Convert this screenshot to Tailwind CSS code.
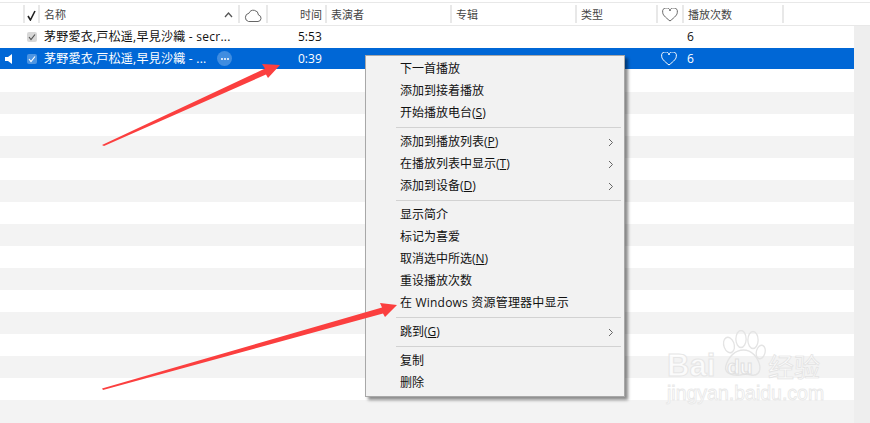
<!DOCTYPE html>
<html lang="zh-CN">
<head>
  <meta charset="UTF-8"/>
  <title>iTunes 播放列表</title>
  <script src="https://cdn.jsdelivr.net/npm/@tailwindcss/browser@4"></script>
</head>
<body class="relative w-[870px] h-[423px] overflow-hidden bg-white text-[12px] text-[#111] font-['Open_Sans','Noto_Sans_CJK_JP',sans-serif]">

  <!-- column header -->
  <div class="mt-[2px] h-[24px] border-y border-[#e8e8e8] flex items-center text-[11px] text-[#444]">
    <div class="w-[25px] h-[18px] border-r-2 border-[#e8e8e8]"></div>
    <div class="w-[15px] h-[18px] pt-[2px] border-r-2 border-[#e8e8e8] flex items-center justify-center">
      <svg width="9" height="11" viewBox="0 0 9 11" fill="none" stroke="#222" stroke-width="1.6"><path d="M1 6l2.4 4L8 1"/></svg>
    </div>
    <div class="w-[200px] h-[18px] pt-[2px] border-r-2 border-[#e8e8e8] flex items-center justify-between pl-[4px] pr-[5px]">
      <span>名称</span>
      <svg width="9" height="6" viewBox="0 0 9 6" fill="none" stroke="#555" stroke-width="1.3"><path d="M1 5l3.5-4L8 5"/></svg>
    </div>
    <div class="w-[28px] h-[18px] pt-[2px] border-r-2 border-[#e8e8e8] flex items-center justify-center">
      <svg width="18" height="13" viewBox="0 0 18 13" fill="none" stroke="#666"><path d="M4.5 12.5h9.5a3.3 3.3 0 0 0 .5-6.5 5 5 0 0 0-9.6-1.7A4.2 4.2 0 0 0 4.500 12.500z"/></svg>
    </div>
    <div class="w-[59px] h-[18px] pt-[2px] border-r-2 border-[#e8e8e8] flex items-center justify-end pr-[3px]">时间</div>
    <div class="w-[125px] h-[18px] pt-[2px] border-r-2 border-[#e8e8e8] flex items-center pl-[4px]">表演者</div>
    <div class="w-[125px] h-[18px] pt-[2px] border-r-2 border-[#e8e8e8] flex items-center pl-[4px]">专辑</div>
    <div class="w-[81px] h-[18px] pt-[2px] border-r-2 border-[#e8e8e8] flex items-center pl-[4px]">类型</div>
    <div class="w-[26px] h-[18px] pt-[2px] border-r-2 border-[#e8e8e8] flex items-center justify-center">
      <svg width="16" height="14" viewBox="0 0 16 14" fill="none" stroke="#666"><path d="M8 13C3 9 .7 6.800 .7 4.300A3.500 3.500 0 0 1 8 3a3.500 3.500 0 0 1 7.300 1.300C15.300 6.800 13 9 8 13z"/></svg>
    </div>
    <div class="w-[100px] h-[18px] pt-[2px] border-r-2 border-[#e8e8e8] flex items-center pl-[4px]">播放次数</div>
  </div>

  <!-- track rows -->
  <div class="flex">
    <div class="w-[854px]">
      <div class="h-[22px] flex items-center">
        <div class="w-[27px]"></div>
        <div class="w-[10px] h-[10px] rounded-[2px] bg-[#d8d8d8] flex items-center justify-center">
          <svg width="8" height="8" viewBox="0 0 8 8" fill="none" stroke="#555" stroke-width="1.200"><path d="M1 4l2 2.500L7 1.500"/></svg>
        </div>
        <div lang="ja" class="w-[193px] pl-[7px] whitespace-nowrap tracking-[0.25px]">茅野愛衣,戸松遥,早見沙織 - secr...</div>
        <div class="w-[68px]"></div>
        <div class="w-[363px]">5:53</div>
        <div class="w-[26px]"></div>
        <div>6</div>
      </div>
      <div class="h-[21px] mb-px flex items-center bg-[#0067d6] text-white">
        <div class="w-[27px] pl-[5px]">
          <svg width="8" height="10" viewBox="0 0 8 10" fill="#fff"><path d="M0 3h3l4-3v10L3 7H0z"/></svg>
        </div>
        <div class="w-[10px] h-[10px] rounded-[2px] bg-white/30 flex items-center justify-center">
          <svg width="8" height="8" viewBox="0 0 8 8" fill="none" stroke="#fff" stroke-width="1.200"><path d="M1 4l2 2.500L7 1.500"/></svg>
        </div>
        <div lang="ja" class="w-[180px] pl-[7px] whitespace-nowrap tracking-[0.25px]">茅野愛衣,戸松遥,早見沙織 - ...</div>
        <div class="w-[15px] h-[15px] rounded-full bg-white/25 flex items-center justify-center gap-px">
          <span class="w-[2px] h-[2px] rounded-full bg-white"></span>
          <span class="w-[2px] h-[2px] rounded-full bg-white"></span>
          <span class="w-[2px] h-[2px] rounded-full bg-white"></span>
        </div>
        <div class="w-[66px]"></div>
        <div class="w-[363px]">0:39</div>
        <div class="w-[26px]">
          <svg width="16" height="14" viewBox="0 0 16 14" fill="none" stroke="#fff"><path d="M8 13C3 9 .7 6.800 .7 4.300A3.500 3.500 0 0 1 8 3a3.500 3.500 0 0 1 7.300 1.300C15.300 6.800 13 9 8 13z"/></svg>
        </div>
        <div>6</div>
      </div>
      <div class="h-[22px]"></div>
      <div class="h-[22px] bg-[#f3f3f3]"></div>
      <div class="h-[22px]"></div>
      <div class="h-[22px] bg-[#f3f3f3]"></div>
      <div class="h-[22px]"></div>
      <div class="h-[22px] bg-[#f3f3f3]"></div>
      <div class="h-[22px]"></div>
      <div class="h-[22px] bg-[#f3f3f3]"></div>
      <div class="h-[22px]"></div>
      <div class="h-[22px] bg-[#f3f3f3]"></div>
      <div class="h-[22px]"></div>
      <div class="h-[22px] bg-[#f3f3f3]"></div>
      <div class="h-[22px]"></div>
      <div class="h-[22px] bg-[#f3f3f3]"></div>
      <div class="h-[22px]"></div>
      <div class="h-[23px] bg-[#f3f3f3]"></div>
    </div>
    <div class="w-[16px] bg-[#eeeeee]"></div>
  </div>

  <!-- watermark -->
  <div class="absolute left-[667px] top-[330px] w-[165px] h-[80px]">
    <svg class="absolute left-[50px] top-0" width="60" height="50" viewBox="0 0 70 50" preserveAspectRatio="none" fill="none" stroke="#e4e4e4" stroke-width="1.500">
      <ellipse cx="14" cy="15" rx="6" ry="8" transform="rotate(-25 14 15)"/>
      <ellipse cx="28" cy="9" rx="6" ry="8.500"/>
      <ellipse cx="42" cy="10" rx="6" ry="8.500"/>
      <ellipse cx="51" cy="22" rx="5" ry="7" transform="rotate(20 51 22)"/>
      <path d="M10 37c3-11 12-17 21-17s17 7 19 16c1 6-3 10-10 9-5-1-8-1-13 0-10 1-18-2-17-8z"/>
    </svg>
    <div class="absolute left-0 top-[17px] text-[31px] leading-[38px] font-bold text-white/70 [-webkit-text-stroke:1px_#e6e6e6] font-['Liberation_Sans',sans-serif]">Bai</div>
    <div class="absolute left-[60px] top-[25px] text-[21px] leading-[24px] font-bold text-white/70 [-webkit-text-stroke:1px_#e0e0e0] font-['Liberation_Sans',sans-serif]">du</div>
    <div class="absolute left-[101px] top-[21px] text-[26px] leading-[30px] text-white/70 [-webkit-text-stroke:0.7px_#e2e2e2] font-['Noto_Sans_CJK_SC',sans-serif]">经验</div>
    <div class="absolute left-0 top-[51px] text-[19.5px] leading-[24px] text-white/70 [-webkit-text-stroke:0.8px_#e8e8e8] font-['Liberation_Sans',sans-serif]">jingyan.baidu.com</div>
  </div>

  <!-- context menu -->
  <div class="absolute left-[365px] top-[55px] w-[260px] h-[342px] pt-[2px] bg-[#f2f2f2] border border-[#a8a8a8] shadow-[3px_3px_3px_rgba(0,0,0,0.45)] text-[#111] font-['Open_Sans','Noto_Sans_CJK_SC',sans-serif]">
    <div class="h-[22px] pl-[34px] flex items-center">下一首播放</div>
    <div class="h-[22px] pl-[34px] flex items-center">添加到接着播放</div>
    <div class="h-[22px] pl-[34px] flex items-center"><span>开始播放电台(<u>S</u>)</span></div>
    <div class="h-px ml-[30px] mr-[3px] mt-[3px] mb-[3px] bg-[#d2d2d2]"></div>
    <div class="h-[22px] pl-[34px] pr-[10px] flex items-center justify-between">
      <span>添加到播放列表(<u>P</u>)</span>
      <svg width="6" height="9" viewBox="0 0 6 9" fill="none" stroke="#666"><path d="M1 1l3.500 3.500L1 8"/></svg>
    </div>
    <div class="h-[22px] pl-[34px] pr-[10px] flex items-center justify-between">
      <span>在播放列表中显示(<u>T</u>)</span>
      <svg width="6" height="9" viewBox="0 0 6 9" fill="none" stroke="#666"><path d="M1 1l3.500 3.500L1 8"/></svg>
    </div>
    <div class="h-[22px] pl-[34px] pr-[10px] flex items-center justify-between">
      <span>添加到设备(<u>D</u>)</span>
      <svg width="6" height="9" viewBox="0 0 6 9" fill="none" stroke="#666"><path d="M1 1l3.500 3.500L1 8"/></svg>
    </div>
    <div class="h-px ml-[30px] mr-[3px] mt-[3px] mb-[3px] bg-[#d2d2d2]"></div>
    <div class="h-[22px] pl-[34px] flex items-center">显示简介</div>
    <div class="h-[22px] pl-[34px] flex items-center">标记为喜爱</div>
    <div class="h-[22px] pl-[34px] flex items-center"><span>取消选中所选(<u>N</u>)</span></div>
    <div class="h-[22px] pl-[34px] flex items-center">重设播放次数</div>
    <div class="h-[22px] pl-[34px] flex items-center whitespace-pre tracking-[0.2px]">在 Windows 资源管理器中显示</div>
    <div class="h-px ml-[30px] mr-[3px] mt-[3px] mb-[3px] bg-[#d2d2d2]"></div>
    <div class="h-[22px] pl-[34px] pr-[10px] flex items-center justify-between">
      <span>跳到(<u>G</u>)</span>
      <svg width="6" height="9" viewBox="0 0 6 9" fill="none" stroke="#666"><path d="M1 1l3.500 3.500L1 8"/></svg>
    </div>
    <div class="h-px ml-[30px] mr-[3px] mt-[3px] mb-[3px] bg-[#d2d2d2]"></div>
    <div class="h-[22px] pl-[34px] flex items-center">复制</div>
    <div class="h-[22px] pl-[34px] flex items-center">删除</div>
  </div>

  <!-- annotation arrows -->
  <svg class="absolute left-0 top-0 pointer-events-none" width="870" height="423" viewBox="0 0 870 423" fill="#fb3f3f">
    <polygon points="102,145 265,68.500 262,64 280,65 268,78 266,74.500 104,146"/>
    <polygon points="102,388.500 382,307.500 380,303 397,305 385,317 383,313.500 103,390"/>
  </svg>
</body>
</html>
